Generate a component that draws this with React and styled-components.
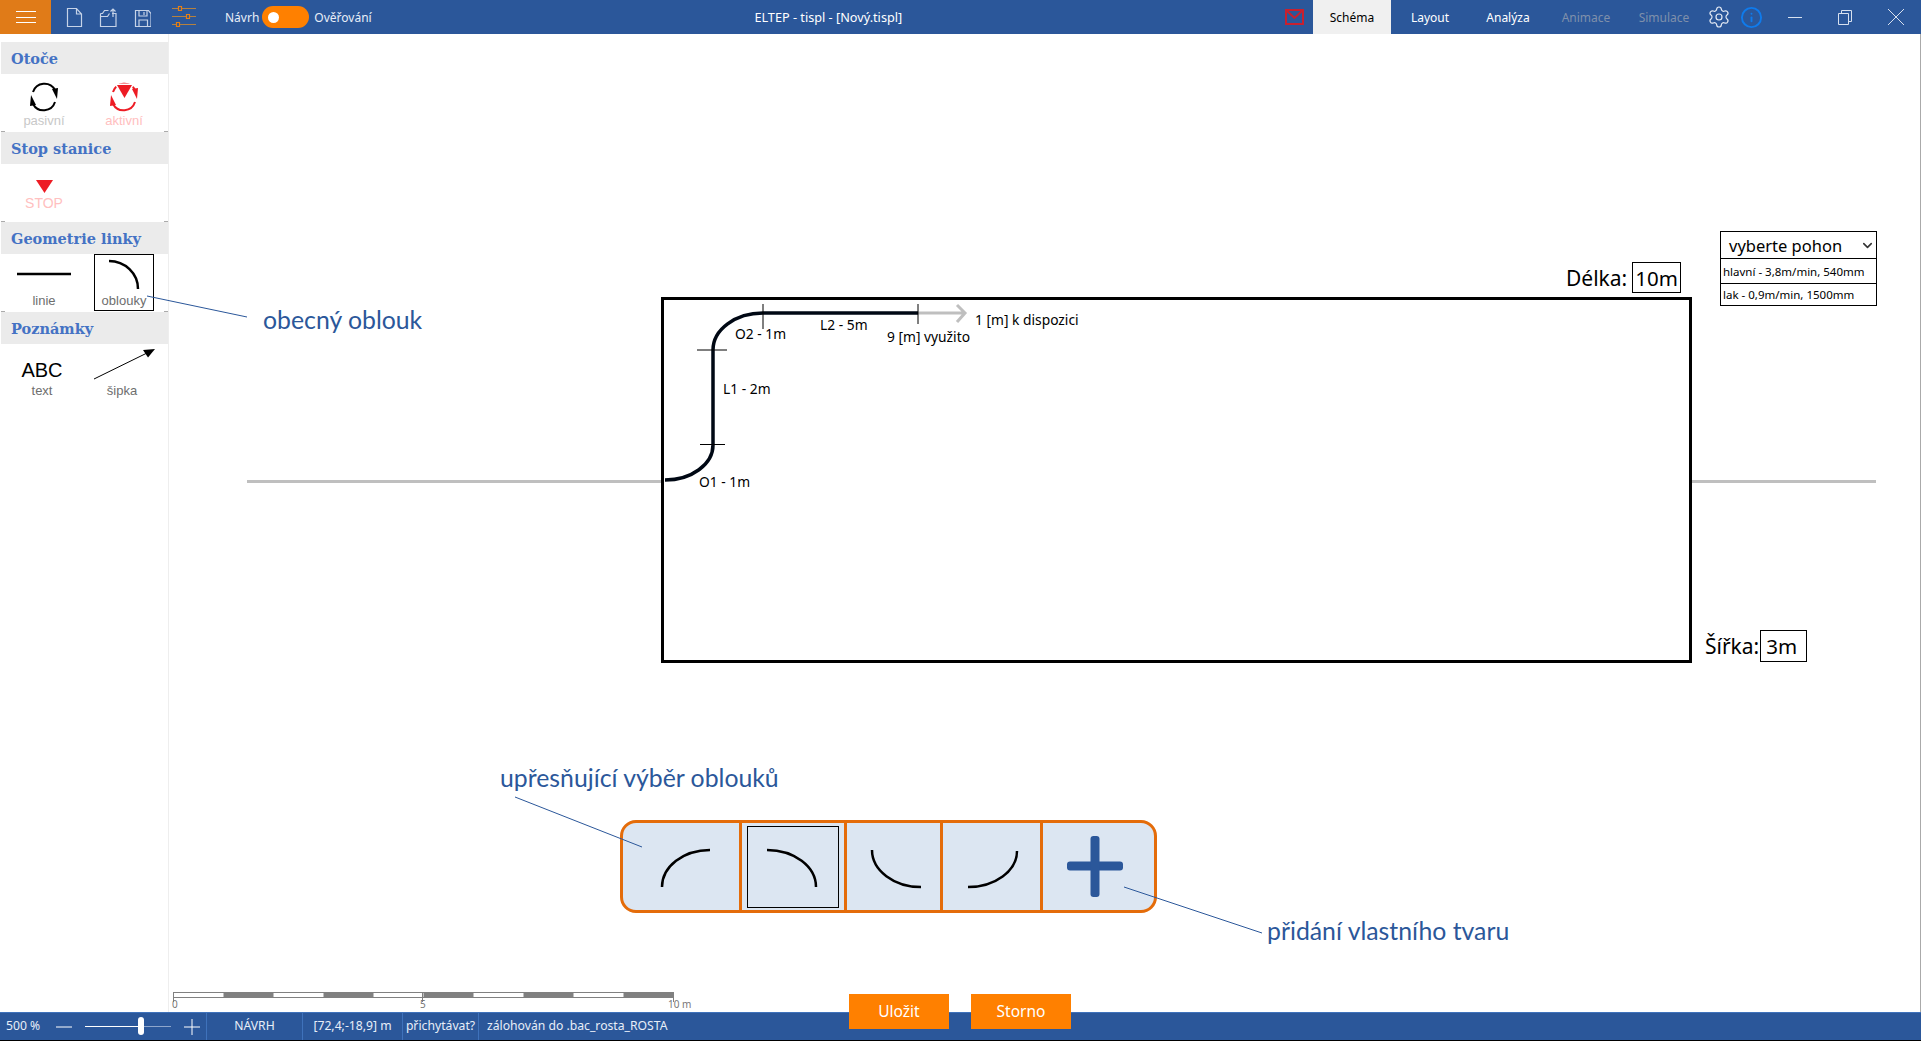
import React from 'react'
import styled, { createGlobalStyle, css } from 'styled-components'
import { Settings, Info, ChevronDown } from 'lucide-react'

const BLUE = '#2b579a'
const ORANGE = '#ff8000'
const UI_FONT = '"Noto Sans", "Open Sans", sans-serif'
const ARIAL = '"Liberation Sans", Arial, sans-serif'

// canvas starts right of the sidebar, under the top bar; diagram numbers below are page pixels
const CANVAS_X = 169
const CANVAS_Y = 34

const GlobalStyle = createGlobalStyle`
  html, body {
    margin: 0;
    padding: 0;
    background: #fff;
  }
  * {
    box-sizing: border-box;
  }
`

const App = () => {
  return (
    <Page>
      <GlobalStyle />
      <TopBar>
        <MenuButton>
          <MenuLine />
          <MenuLine />
          <MenuLine />
        </MenuButton>
        <FileTools>
          <FileIcon />
          <OpenIcon />
          <SaveIcon />
          <SlidersIcon />
        </FileTools>
        <ModeSwitch>
          <span>Návrh</span>
          <Toggle>
            <ToggleKnob />
          </Toggle>
          <span>Ověřování</span>
        </ModeSwitch>
        <Title>ELTEP - tispl - [Nový.tispl]</Title>
        <MailIcon />
        <Tabs>
          <Tab $active>Schéma</Tab>
          <Tab>Layout</Tab>
          <Tab>Analýza</Tab>
          <Tab $disabled>Animace</Tab>
          <Tab $disabled>Simulace</Tab>
        </Tabs>
        <HelpButton>
          <Settings size={24} strokeWidth={1.2} color="#e4eaf4" />
        </HelpButton>
        <HelpButton>
          <Info size={23} strokeWidth={2} color="#0f7bec" />
        </HelpButton>
        <WindowButtons>
          <WindowIcon>
            <path d="M1 8.5h14" />
          </WindowIcon>
          <WindowIcon>
            <path d="M1.5 4.5h10v11h-10z M4.5 4.5v-3h10v11h-3" />
          </WindowIcon>
          <WindowIcon $big>
            <path d="M1 1l16 16M17 1L1 17" />
          </WindowIcon>
        </WindowButtons>
      </TopBar>

      <Main>
        <Sidebar>
          <SectionHead>Otoče</SectionHead>
          <ToolGrid>
            <Tool>
              <ToolIcon>
                <RotateArrows colour="#000" />
              </ToolIcon>
              <ToolLabel $colour="#c8c8c8">pasivní</ToolLabel>
            </Tool>
            <Tool>
              <ToolIcon>
                <RotateArrows colour="#ed1c24" />
                <ActiveMark points="23,11 38,11 30.5,24" />
              </ToolIcon>
              <ToolLabel $colour="#ffc0c0">aktivní</ToolLabel>
            </Tool>
          </ToolGrid>
          <SectionHead>Stop stanice</SectionHead>
          <ToolGrid>
            <Tool>
              <ToolIcon $short>
                <polygon points="22,16 39,16 30.5,29" fill="#ed1c24" />
              </ToolIcon>
              <ToolLabel $colour="#ffc0c0" $size={14}>STOP</ToolLabel>
            </Tool>
          </ToolGrid>
          <SectionHead>Geometrie linky</SectionHead>
          <ToolGrid>
            <Tool>
              <ToolIcon>
                <line x1="3" y1="20" x2="57" y2="20" stroke="#000" strokeWidth="2.5" />
              </ToolIcon>
              <ToolLabel>linie</ToolLabel>
            </Tool>
            <Tool $selected>
              <ToolIcon>
                <path d="M15 7 A29 28 0 0 1 44 35" fill="none" stroke="#000" strokeWidth="2.5" />
              </ToolIcon>
              <ToolLabel>oblouky</ToolLabel>
            </Tool>
          </ToolGrid>
          <SectionHead>Poznámky</SectionHead>
          <ToolGrid $plain>
            <Tool>
              <AbcGlyph>ABC</AbcGlyph>
              <ToolLabel>text</ToolLabel>
            </Tool>
            <Tool>
              <ToolIcon>
                <line x1="2" y1="35" x2="55" y2="9" stroke="#000" strokeWidth="1" />
                <polygon points="51,6 63,5 56,13.5" fill="#000" />
              </ToolIcon>
              <ToolLabel>šipka</ToolLabel>
            </Tool>
          </ToolGrid>
        </Sidebar>

        <Canvas>
          <Drawing viewBox="169 34 1751 978">
            <GuideLines />
            <Track />
            <ScaleBar />
          </Drawing>

          <Room />

          <TrackLabel $x={699} $y={472}>O1 - 1m</TrackLabel>
          <TrackLabel $x={723} $y={379}>L1 - 2m</TrackLabel>
          <TrackLabel $x={735} $y={324}>O2 - 1m</TrackLabel>
          <TrackLabel $x={820} $y={315}>L2 - 5m</TrackLabel>
          <TrackLabel $x={887} $y={327}>9 [m] využito</TrackLabel>
          <TrackLabel $x={975} $y={310}>1 [m] k dispozici</TrackLabel>

          <Dimension $x={1566} $y={262} $gap={5}>
            Délka:
            <DimensionValue $w={49} $h={31}>10m</DimensionValue>
          </Dimension>
          <Dimension $x={1705} $y={630} $gap={1}>
            Šířka:
            <DimensionValue $w={47} $h={32} $pad={5}>3m</DimensionValue>
          </Dimension>

          <DrivePanel>
            <DriveSelect>
              vyberte pohon
              <ChevronDown size={15} strokeWidth={2.5} color="#333" />
            </DriveSelect>
            <DriveRow $h={25}>hlavní - 3,8m/min, 540mm</DriveRow>
            <DriveRow $h={22}>lak - 0,9m/min, 1500mm</DriveRow>
          </DrivePanel>

          <Note $x={263} $y={302}>obecný oblouk</Note>
          <Note $x={500} $y={760}>upřesňující výběr oblouků</Note>
          <Note $x={1267} $y={913}>přidání vlastního tvaru</Note>

          <ArcPicker>
            <ArcCell $w={119}>
              <CellDrawing viewBox="623 823 116 87">
                <ArcPath d="M662 887 A48 37 0 0 1 710 850" />
              </CellDrawing>
            </ArcCell>
            <ArcCell $w={105}>
              <CellDrawing viewBox="742 823 102 87">
                <rect x="747.5" y="826.5" width="91" height="81" fill="none" stroke="#000" strokeWidth="1" />
                <ArcPath d="M767 850 A49 37 0 0 1 816 887" />
              </CellDrawing>
            </ArcCell>
            <ArcCell $w={96}>
              <CellDrawing viewBox="847 823 93 87">
                <ArcPath d="M872 850 A49 37 0 0 0 921 887" />
              </CellDrawing>
            </ArcCell>
            <ArcCell $w={100}>
              <CellDrawing viewBox="943 823 97 87">
                <ArcPath d="M1017 851 A49 36 0 0 1 968 887" />
              </CellDrawing>
            </ArcCell>
            <ArcCell $last $w={111}>
              <CellDrawing viewBox="1043 823 111 87">
                <rect x="1067" y="861.5" width="56" height="9" rx="3" fill={BLUE} />
                <rect x="1090.5" y="836" width="9" height="61" rx="3" fill={BLUE} />
              </CellDrawing>
            </ArcCell>
          </ArcPicker>

          {/* callout lines sit on top of the picker and reach over the sidebar */}
          <Drawing viewBox="169 34 1751 978">
            <CalloutLine x1="147" y1="296" x2="247" y2="317" />
            <CalloutLine x1="515" y1="797" x2="642" y2="847" />
            <CalloutLine x1="1124" y1="887" x2="1262" y2="933" />
          </Drawing>

          <ScaleMark $x={172}>0</ScaleMark>
          <ScaleMark $x={420}>5</ScaleMark>
          <ScaleMark $x={668}>10 m</ScaleMark>
        </Canvas>
      </Main>

      <StatusBar>
        <ZoomCell>
          <ZoomValue>500 %</ZoomValue>
          <ZoomSign>
            <path d="M0 8h16" />
          </ZoomSign>
          <ZoomTrack>
            <ZoomFill $value={56} />
            <ZoomThumb $value={56} />
          </ZoomTrack>
          <ZoomSign>
            <path d="M0 8h16M8 0v16" />
          </ZoomSign>
        </ZoomCell>
        <StatusCell $w={96} $center>NÁVRH</StatusCell>
        <StatusCell $w={100} $center>[72,4;-18,9] m</StatusCell>
        <StatusCell $w={76} $center>přichytávat?</StatusCell>
        <StatusCell $pad={8}>zálohován do .bac_rosta_ROSTA</StatusCell>
      </StatusBar>

      <Actions>
        <ActionButton>Uložit</ActionButton>
        <ActionButton>Storno</ActionButton>
      </Actions>
    </Page>
  )
}

const FileIcon = () => (
  <ToolbarSvg width="18" height="24" viewBox="0 0 18 24">
    <path d="M2.5 5.5h9l5 5.5v12.500h-14z M11.500 5.500v5.500h5" />
  </ToolbarSvg>
)

const OpenIcon = () => (
  <ToolbarSvg width="18" height="24" viewBox="0 0 18 24">
    <path d="M1.500 12.500v13h15.500v-13h-4 M1.500 12.500h2l2-3h4 M1.500 15.500h7l2-3" transform="translate(0 -2)" />
    <path d="M14 14V6M11.500 8.500L14 6l2.500 2.500" />
  </ToolbarSvg>
)

const SaveIcon = () => (
  <ToolbarSvg width="18" height="24" viewBox="0 0 18 24">
    <path d="M2.500 8.500h13l2.500 3v13h-15.500z M6 8.500v5.500h8v-5.500 M6 24.500v-6.500h8.500v6.500 M11 10v3" transform="translate(0 -1)" />
  </ToolbarSvg>
)

const SlidersIcon = () => (
  <SlidersSvg width="24" height="24" viewBox="0 0 24 24">
    <path d="M0 3.500h24M0 11.500h24M0 19.500h24" stroke="#b5813f" strokeWidth="1" />
    <path d="M6.500 1.500h3v4h-3z M14.500 9.500h3v4h-3z M4.500 17.500h3v4h-3z" fill={BLUE} stroke="#e87f12" strokeWidth="1.200" />
  </SlidersSvg>
)

const MailIcon = () => (
  <MailSvg width="19" height="16" viewBox="0 0 19 16">
    <path d="M1 1h17v14H1z M1 1l8.500 8L18 1" />
  </MailSvg>
)

const RotateArrows = ({ colour }) => (
  <g>
    <path d="M19 18 A12 12 0 0 1 41 16" fill="none" stroke={colour} strokeWidth="2" />
    <polygon points="38,15 44,14 43,25" fill={colour} />
    <path d="M41 28 A12 12 0 0 1 19 30" fill="none" stroke={colour} strokeWidth="2" />
    <polygon points="22,31 16,32 17,21" fill={colour} />
  </g>
)

const GuideLines = () => (
  <g stroke="#bfbfbf" strokeWidth="3" fill="none">
    <path d="M247 481.500H662" />
    <path d="M1692 481.500H1876" />
    <path d="M918 313H965M957 305l8 8-8 9" />
  </g>
)

const Track = () => (
  <g fill="none">
    <path
      d="M665 480 A48 35 0 0 0 713 445 V350 A50 37 0 0 1 763 313 H918"
      stroke="#000814"
      strokeWidth="3.500"
    />
    <path d="M763 304V329M918 304V324M697 350H727M700 444.500H725" stroke="#000" strokeWidth="1" />
  </g>
)

const ScaleBar = () => {
  const segments = [0, 1, 2, 3, 4, 5, 6, 7, 8, 9]
  return (
    <g>
      <rect x="173.5" y="992.5" width="500" height="5" fill="#fff" stroke="#808080" strokeWidth="1" />
      {segments
        .filter(i => i % 2 === 1)
        .map(i => (
          <rect key={i} x={173.5 + i * 50} y="992.500" width="50" height="5" fill="#808080" />
        ))}
      <path d="M173.500 992V1002M422.500 992V1002M673.500 992V1002" stroke="#808080" strokeWidth="1" />
    </g>
  )
}

const Page = styled.div`
  position: relative;
  display: flex;
  flex-direction: column;
  width: 100%;
  height: 100vh;
  overflow: hidden;
  background: #fff;
`
const TopBar = styled.header`
  display: flex;
  align-items: center;
  flex: 0 0 34px;
  height: 34px;
  background: ${BLUE};
  color: #fff;
  font-family: ${UI_FONT};
  font-size: 12px;
`
const MenuButton = styled.div`
  display: flex;
  flex-direction: column;
  align-items: center;
  justify-content: center;
  gap: 4.5px;
  flex: 0 0 51px;
  height: 100%;
  background: #e07b18;
`
const MenuLine = styled.span`
  display: block;
  width: 20px;
  height: 1px;
  background: #fff;
`
const FileTools = styled.div`
  display: flex;
  align-items: flex-start;
  gap: 16px;
  height: 100%;
  padding: 3px 0 0 14px;
`
const ToolbarSvg = styled.svg`
  fill: none;
  stroke: #c6d3e8;
  stroke-width: 1.2;
`
const SlidersSvg = styled.svg`
  margin-left: 5px;
  margin-top: 2px;
`
const ModeSwitch = styled.div`
  display: flex;
  align-items: center;
  gap: 4px;
  margin-left: 29px;
  color: #e8eef8;
`
const Toggle = styled.div`
  display: flex;
  align-items: center;
  width: 47px;
  height: 22px;
  margin-right: 1px;
  margin-left: -1px;
  padding-left: 6px;
  border-radius: 11px;
  background: ${ORANGE};
`
const ToggleKnob = styled.span`
  display: block;
  width: 11px;
  height: 11px;
  border-radius: 50%;
  background: #fff;
`
const Title = styled.div`
  flex: 1;
  text-align: center;
  font-size: 12.7px;
`
const MailSvg = styled.svg`
  flex: 0 0 19px;
  margin-right: 9px;
  fill: none;
  stroke: #c8202f;
  stroke-width: 2;
`
const Tabs = styled.nav`
  display: flex;
  height: 100%;
`
const Tab = styled.div`
  display: flex;
  align-items: center;
  justify-content: center;
  width: 78px;
  height: 100%;
  color: #fff;
  ${({ $active }) =>
    $active &&
    css`
      background: #f0f0f0;
      color: #000;
    `}
  ${({ $disabled }) =>
    $disabled &&
    css`
      color: #7f90ab;
    `}
`
const HelpButton = styled.div`
  display: flex;
  align-items: center;
  justify-content: center;
  width: 32px;
  height: 100%;
`
const WindowButtons = styled.div`
  display: grid;
  grid-template-columns: repeat(3, 1fr);
  justify-items: center;
  align-items: center;
  width: 151px;
  height: 100%;
  margin-left: 3px;
`
const WindowIcon = styled.svg.attrs(({ $big }) => ({
  width: $big ? 18 : 16,
  height: $big ? 18 : 17,
  viewBox: $big ? '0 0 18 18' : '0 0 16 17',
}))`
  fill: none;
  stroke: #d8e1ef;
  stroke-width: 1;
`
const Main = styled.main`
  display: flex;
  flex: 1;
  min-height: 0;
`
const Sidebar = styled.aside`
  flex: 0 0 169px;
  padding: 8px 0 0 1px;
  border-right: 1px solid #eeeeee;
`
const SectionHead = styled.h3`
  display: flex;
  align-items: center;
  height: 32px;
  margin: 0;
  padding-left: 10px;
  background: #ebebeb;
  color: #4472c4;
  font-family: "DejaVu Serif", serif;
  font-size: 14.5px;
  font-weight: 700;
`
const ToolGrid = styled.div`
  display: grid;
  grid-template-columns: repeat(2, 80px);
  height: 58px;
  padding-left: 3px;
  ${({ $plain }) =>
    $plain
      ? css`
          padding-left: 1px;
        `
      : css`
          background:
            linear-gradient(#aaaaaa, #aaaaaa) left bottom / 4px 1px no-repeat,
            linear-gradient(#aaaaaa, #aaaaaa) right bottom / 4px 1px no-repeat;
        `}
`
const Tool = styled.div`
  display: flex;
  flex-direction: column;
  align-items: center;
  width: 60px;
  height: 57px;
  margin: 0 auto;
  ${({ $selected }) =>
    $selected &&
    css`
      outline: 1px solid #000;
      outline-offset: -1px;
    `}
`
const ToolIcon = styled.svg.attrs(({ $short }) => ({
  width: 60,
  height: $short ? 32 : 40,
  viewBox: `0 0 60 ${$short ? 32 : 40}`,
}))`
  display: block;
  flex: none;
  overflow: visible;
`
const ActiveMark = styled.polygon`
  fill: #ed1c24;
  stroke: #fff;
  stroke-width: 3;
  paint-order: stroke;
`
const ToolLabel = styled.span`
  height: 14px;
  color: ${({ $colour }) => $colour ?? '#6e6e6e'};
  font-family: ${ARIAL};
  font-size: ${({ $size }) => $size ?? 13}px;
  line-height: 14px;
  white-space: nowrap;
`
const AbcGlyph = styled.div`
  display: flex;
  align-items: flex-end;
  height: 40px;
  padding-bottom: 2px;
  color: #000;
  font-family: ${ARIAL};
  font-size: 20px;
  line-height: 24px;
`
const Canvas = styled.section`
  position: relative;
  flex: 1;
  min-width: 0;
  border-right: 1px solid #aaaaaa;
`
const Drawing = styled.svg`
  position: absolute;
  top: 0;
  left: 0;
  width: 1751px;
  height: 978px;
  overflow: visible;
  pointer-events: none;
`
const Room = styled.div`
  position: absolute;
  left: ${661 - CANVAS_X}px;
  top: ${297 - CANVAS_Y}px;
  width: 1031px;
  height: 366px;
  border: 3.5px solid #000;
`
const TrackLabel = styled.span`
  position: absolute;
  left: ${({ $x }) => $x - CANVAS_X}px;
  top: ${({ $y }) => $y - CANVAS_Y}px;
  color: #000;
  font-family: ${UI_FONT};
  font-size: 13.8px;
  line-height: 20px;
  white-space: nowrap;
`
const Dimension = styled.div`
  position: absolute;
  left: ${({ $x }) => $x - CANVAS_X}px;
  top: ${({ $y }) => $y - CANVAS_Y}px;
  display: flex;
  align-items: center;
  gap: ${({ $gap }) => $gap}px;
  color: #000;
  font-family: ${UI_FONT};
  font-size: 21px;
  white-space: nowrap;
`
const DimensionValue = styled.div`
  display: flex;
  align-items: center;
  flex: none;
  width: ${({ $w }) => $w}px;
  height: ${({ $h }) => $h}px;
  padding-left: ${({ $pad }) => $pad ?? 2}px;
  border: 1px solid #000;
  font-size: 20.5px;
`
const DrivePanel = styled.div`
  position: absolute;
  left: ${1720 - CANVAS_X}px;
  top: ${231 - CANVAS_Y}px;
  width: 157px;
  border: 1px solid #000;
  font-family: ${UI_FONT};
  color: #000;
`
const DriveSelect = styled.div`
  display: flex;
  align-items: center;
  justify-content: space-between;
  height: 26px;
  padding: 0 1px 0 8px;
  font-size: 16.5px;
  white-space: nowrap;
`
const DriveRow = styled.div`
  display: flex;
  align-items: center;
  height: ${({ $h }) => $h}px;
  padding-left: 2px;
  border-top: 1px solid #000;
  font-size: 11.5px;
  white-space: nowrap;
`
const Note = styled.span`
  position: absolute;
  left: ${({ $x }) => $x - CANVAS_X}px;
  top: ${({ $y }) => $y - CANVAS_Y}px;
  color: ${BLUE};
  font-family: Lato, "Noto Sans", sans-serif;
  font-size: 24.8px;
  line-height: 36px;
  white-space: nowrap;
`
const ArcPicker = styled.div`
  position: absolute;
  left: ${620 - CANVAS_X}px;
  top: ${820 - CANVAS_Y}px;
  display: flex;
  width: 537px;
  height: 93px;
  overflow: hidden;
  border: 3px solid #e46c0a;
  border-radius: 16px;
  background: #dce6f2;
`
const ArcCell = styled.div`
  flex: 0 0 ${({ $w }) => $w}px;
  border-right: ${({ $last }) => ($last ? 'none' : '3px solid #e46c0a')};
`
const CellDrawing = styled.svg`
  display: block;
  width: 100%;
  height: 100%;
`
const ArcPath = styled.path`
  fill: none;
  stroke: #000;
  stroke-width: 2.5;
`
const CalloutLine = styled.line`
  stroke: ${BLUE};
  stroke-width: 1;
`
const ScaleMark = styled.span`
  position: absolute;
  left: ${({ $x }) => $x - CANVAS_X}px;
  top: ${998 - CANVAS_Y}px;
  color: #777777;
  font-family: ${UI_FONT};
  font-size: 10px;
  line-height: 12px;
  white-space: nowrap;
`
const StatusBar = styled.footer`
  display: flex;
  flex: 0 0 29px;
  height: 29px;
  background: ${BLUE};
  border-top: 1px solid #3f72bb;
  border-bottom: 1px solid #000;
  color: #e8eef8;
  font-family: ${UI_FONT};
  font-size: 12.2px;
  line-height: 1;
`
const ZoomCell = styled.div`
  display: flex;
  align-items: center;
  flex: 0 0 207px;
  padding-left: 6px;
  border-right: 1px solid #3f72bb;
  gap: 13px;
`
const ZoomValue = styled.span`
  flex: 0 0 37px;
  white-space: nowrap;
`
const ZoomSign = styled.svg.attrs({ width: 16, height: 16, viewBox: '0 0 16 16' })`
  flex: none;
  fill: none;
  stroke: #fff;
  stroke-width: 1;
`
const ZoomTrack = styled.div`
  position: relative;
  flex: 0 0 86px;
  height: 1px;
  background: #8ea6cc;
`
const ZoomFill = styled.div`
  width: ${({ $value }) => $value}px;
  height: 1px;
  background: #fff;
`
const ZoomThumb = styled.div`
  position: absolute;
  left: ${({ $value }) => $value - 3}px;
  top: -9px;
  width: 6px;
  height: 18px;
  border-radius: 3px;
  background: #fff;
`
const StatusCell = styled.div`
  display: flex;
  align-items: center;
  justify-content: ${({ $center }) => ($center ? 'center' : 'flex-start')};
  ${({ $w }) => ($w ? `flex: 0 0 ${$w}px;` : 'flex: 1;')}
  padding-left: ${({ $pad }) => $pad ?? 0}px;
  white-space: nowrap;
  border-right: ${({ $w }) => ($w ? '1px solid #3f72bb' : 'none')};
`
const Actions = styled.div`
  position: absolute;
  left: 849px;
  top: 994px;
  display: flex;
  gap: 22px;
`
const ActionButton = styled.button`
  width: 100px;
  height: 35px;
  padding: 0 0 2px;
  border: none;
  background: ${ORANGE};
  color: #fff;
  font-family: ${UI_FONT};
  font-size: 15.5px;
`

export default App
